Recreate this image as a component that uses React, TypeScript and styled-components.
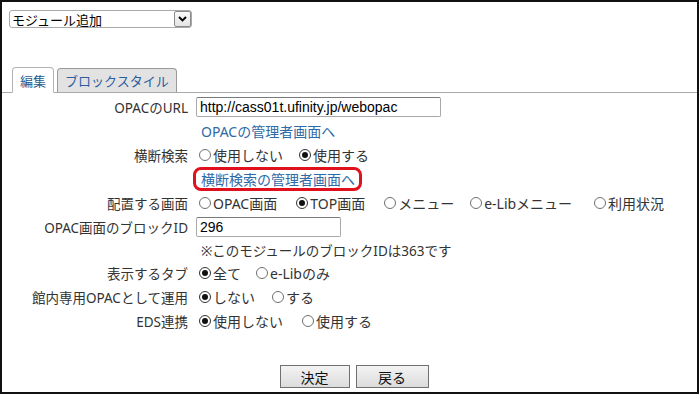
import * as React from 'react';
import styled, { createGlobalStyle } from 'styled-components';

const GlobalStyle = createGlobalStyle`
  html, body {
    margin: 0;
    padding: 0;
    background: #fff;
  }
  body {
    font-family: "Noto Sans", "Noto Sans CJK JP", sans-serif;
    color: #333;
  }
`;

const Frame = styled.div`
  width: 699px;
  height: 394px;
  box-sizing: border-box;
  border: 2px solid #111;
  padding-top: 8px;
  display: flex;
  flex-direction: column;
`;

const SelectBox = styled.div`
  margin-left: 7px;
  width: 183px;
  height: 18px;
  box-sizing: border-box;
  border: 1px solid #a9a9a9;
  border-radius: 3px;
  display: flex;
  align-items: center;
  justify-content: space-between;
  font-family: "Noto Sans CJK JP", sans-serif;
  font-size: 13px;
  color: #000;
  padding-left: 2px;
`;

const SelectArrow = styled.span`
  width: 17px;
  height: 16px;
  box-sizing: border-box;
  border: 1px solid #8a8a8a;
  border-radius: 2px;
  background: linear-gradient(#fafafa, #e4e4e4);
  display: flex;
  align-items: center;
  justify-content: center;
`;

const TabBar = styled.div`
  margin-top: 39px;
  padding-left: 10px;
  display: flex;
  align-items: flex-end;
  gap: 3px;
  border-bottom: 1px solid #aaa;
  height: 25px;
`;

const Tab = styled.div<{ active?: boolean }>`
  box-sizing: border-box;
  height: ${(p) => (p.active ? '26px' : '24px')};
  margin-bottom: ${(p) => (p.active ? '-1px' : '0')};
  padding: 0 7px;
  border: 1px solid ${(p) => (p.active ? '#b4b4b4' : '#9a9a9a')};
  border-bottom: ${(p) => (p.active ? '1px solid #fff' : '0')};
  border-radius: 4px 4px 0 0;
  background: ${(p) => (p.active ? '#fff' : '#e2e2e2')};
  color: ${(p) => (p.active ? '#2b5a8a' : '#2a5ca0')};
  font-family: "Noto Sans CJK JP", sans-serif;
  font-size: 13px;
  display: flex;
  align-items: center;
`;

const Form = styled.div`
  padding-top: 2px;
  display: flex;
  flex-direction: column;
`;

const Row = styled.div<{ h?: number }>`
  height: ${(p) => p.h ?? 24}px;
  display: grid;
  grid-template-columns: 186px 1fr;
  align-items: center;
`;

const Label = styled.div`
  text-align: right;
  font-size: 13.5px;
  color: #333;
  white-space: nowrap;
`;

const Value = styled.div`
  padding-left: 8px;
  display: flex;
  align-items: center;
  font-size: 14px;
  white-space: nowrap;
`;

const TextInput = styled.div<{ w: number }>`
  width: ${(p) => p.w}px;
  height: 20px;
  box-sizing: border-box;
  border: 1px solid #a8a8a8;
  border-top-color: #7a7a7a;
  border-radius: 2px;
  padding-left: 3px;
  display: flex;
  align-items: center;
  font-family: "Liberation Sans", Arial, sans-serif;
  font-size: 14px;
  color: #000;
`;

const Link = styled.a`
  color: #2e6aa6;
  text-decoration: none;
  font-size: 14px;
  margin-left: 5px;
`;

const Highlight = styled.span`
  display: inline-flex;
  align-items: center;
  height: 24px;
  box-sizing: border-box;
  border: 3px solid #e0101c;
  border-radius: 8px;
  padding: 0 4px 0 5px;
  margin-left: -3px;
  & > a {
    margin-left: 0;
  }
`;

const Note = styled.span`
  margin-left: 5px;
  font-size: 13.5px;
  color: #333;
`;

const Options = styled.div`
  display: flex;
  align-items: center;
  margin-left: 3px;
`;

const Option = styled.label<{ gap: number }>`
  display: inline-flex;
  align-items: center;
  margin-right: ${(p) => p.gap}px;
  font-size: 14px;
  color: #333;
`;

const Circle = styled.span<{ checked?: boolean }>`
  width: 12px;
  height: 12px;
  box-sizing: border-box;
  border: 1px solid ${(p) => (p.checked ? '#333' : '#707070')};
  border-radius: 50%;
  margin-right: 2px;
  display: inline-flex;
  align-items: center;
  justify-content: center;
  background: #fff;
  &::after {
    content: '';
    display: ${(p) => (p.checked ? 'block' : 'none')};
    width: 6px;
    height: 6px;
    border-radius: 50%;
    background: #111;
  }
`;

const Buttons = styled.div`
  margin-top: 32px;
  display: flex;
  justify-content: center;
  gap: 6px;
  padding-left: 9px;
`;

const Button = styled.button<{ w: number }>`
  width: ${(p) => p.w}px;
  height: 23px;
  box-sizing: border-box;
  border: 1px solid #707070;
  border-radius: 0;
  background: linear-gradient(#f3f3f3, #dcdcdc);
  font-family: "Noto Sans CJK JP", sans-serif;
  font-size: 14px;
  color: #111;
  padding: 0;
`;

interface RadioItem { text: string, gap: number, checked?: boolean }

function RadioGroup({ items }: { items: RadioItem[] }): JSX.Element {
  return (
    <Options>
      {items.map((item) => (
        <Option gap={item.gap} key={item.text}>
          <Circle checked={item.checked} />
          {item.text}
        </Option>
      ))}
    </Options>
  );
}

function Chevron(): JSX.Element {
  return (
    <svg width="9" height="6" viewBox="0 0 9 6">
      <path d="M1 1 L4.5 4.5 L8 1" fill="none" stroke="#000" strokeWidth="1.8" />
    </svg>
  );
}

export default function App(): JSX.Element {
  return (
    <>
      <GlobalStyle />
      <Frame>
        <SelectBox>
          <span>モジュール追加</span>
          <SelectArrow><Chevron /></SelectArrow>
        </SelectBox>

        <TabBar>
          <Tab active>編集</Tab>
          <Tab>ブロックスタイル</Tab>
        </TabBar>

        <Form>
          <Row>
            <Label>OPACのURL</Label>
            <Value><TextInput w={245}>http://cass01t.ufinity.jp/webopac</TextInput></Value>
          </Row>
          <Row>
            <div />
            <Value><Link href="#">OPACの管理者画面へ</Link></Value>
          </Row>
          <Row>
            <Label>横断検索</Label>
            <Value>
              <RadioGroup items={[
                { text: '使用しない', gap: 16 },
                { text: '使用する', gap: 0, checked: true },
              ]}
              />
            </Value>
          </Row>
          <Row>
            <div />
            <Value>
              <Highlight><Link href="#">横断検索の管理者画面へ</Link></Highlight>
            </Value>
          </Row>
          <Row>
            <Label>配置する画面</Label>
            <Value>
              <RadioGroup items={[
                { text: 'OPAC画面', gap: 19 },
                { text: 'TOP画面', gap: 19 },
                { text: 'メニュー', gap: 16 },
                { text: 'e-Libメニュー', gap: 22 },
                { text: '利用状況', gap: 0 },
              ].map((o) => ({ ...o, checked: o.text === 'TOP画面' }))}
              />
            </Value>
          </Row>
          <Row h={23}>
            <Label>OPAC画面のブロックID</Label>
            <Value><TextInput w={145}>296</TextInput></Value>
          </Row>
          <Row h={23}>
            <div />
            <Value><Note>※このモジュールのブロックIDは363です</Note></Value>
          </Row>
          <Row>
            <Label>表示するタブ</Label>
            <Value>
              <RadioGroup items={[
                { text: '全て', gap: 15, checked: true },
                { text: 'e-Libのみ', gap: 0 },
              ]}
              />
            </Value>
          </Row>
          <Row>
            <Label>館内専用OPACとして運用</Label>
            <Value>
              <RadioGroup items={[
                { text: 'しない', gap: 17, checked: true },
                { text: 'する', gap: 0 },
              ]}
              />
            </Value>
          </Row>
          <Row>
            <Label>EDS連携</Label>
            <Value>
              <RadioGroup items={[
                { text: '使用しない', gap: 19, checked: true },
                { text: '使用する', gap: 0 },
              ]}
              />
            </Value>
          </Row>
        </Form>

        <Buttons>
          <Button w={70}>決定</Button>
          <Button w={73}>戻る</Button>
        </Buttons>
      </Frame>
    </>
  );
}
